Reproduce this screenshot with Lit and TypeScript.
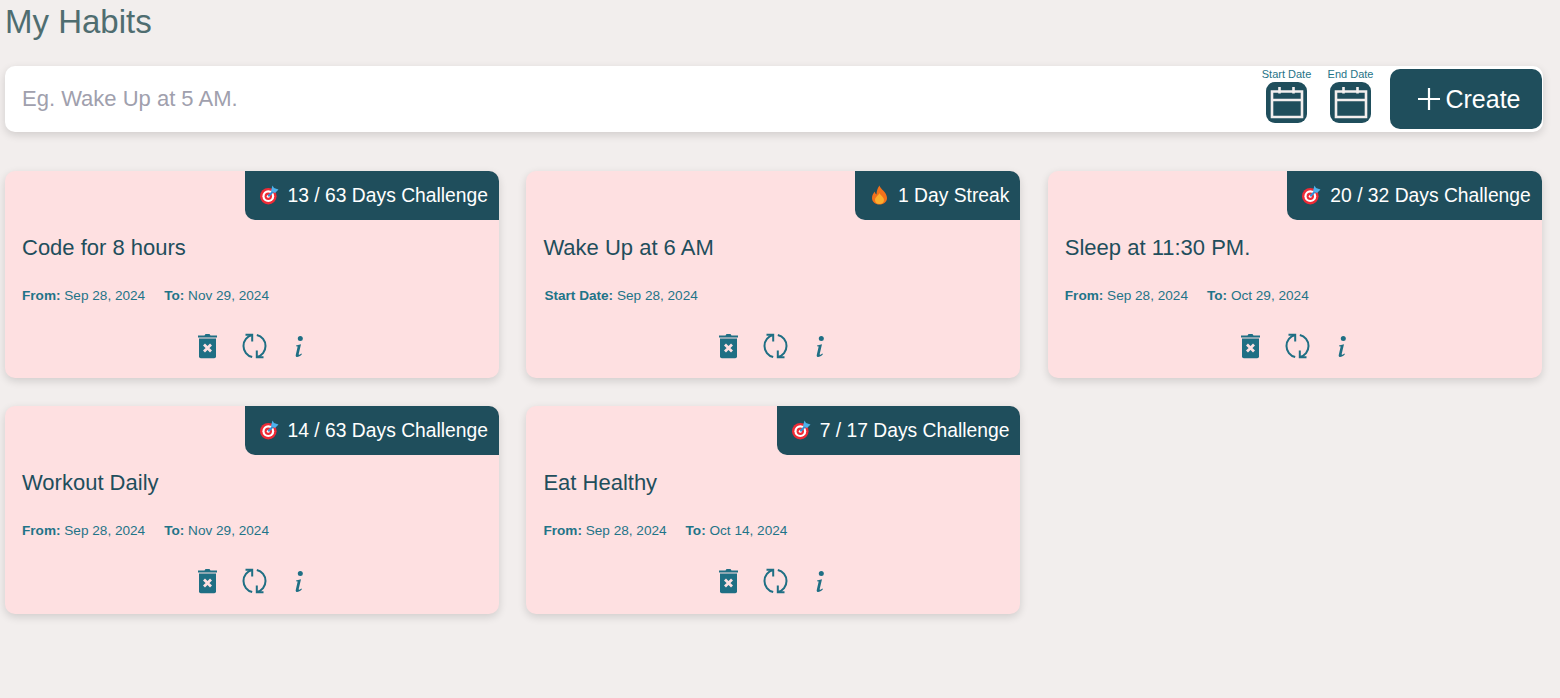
import { LitElement, css, html, svg } from 'lit'
import { customElement } from 'lit/decorators.js'

interface Habit {
  title: string
  badge: string
  kind: 'target' | 'flame'
  from: string
  to?: string
}

const HABITS: Habit[] = [
  { title: 'Code for 8 hours', badge: '13 / 63 Days Challenge', kind: 'target', from: 'Sep 28, 2024', to: 'Nov 29, 2024' },
  { title: 'Wake Up at 6 AM', badge: '1 Day Streak', kind: 'flame', from: 'Sep 28, 2024' },
  { title: 'Sleep at 11:30 PM.', badge: '20 / 32 Days Challenge', kind: 'target', from: 'Sep 28, 2024', to: 'Oct 29, 2024' },
  { title: 'Workout Daily', badge: '14 / 63 Days Challenge', kind: 'target', from: 'Sep 28, 2024', to: 'Nov 29, 2024' },
  { title: 'Eat Healthy', badge: '7 / 17 Days Challenge', kind: 'target', from: 'Sep 28, 2024', to: 'Oct 14, 2024' },
]

const calendar = html`<svg class="cal" viewBox="0 0 41 41">
  <rect width="41" height="41" rx="9" fill="#1f4e5c"></rect>
  <path d="M6 9.5h30v25.5H6zM6 18h30M13.5 5v6.500M27.5 5v6.500" fill="none" stroke="#f3efee" stroke-width="2.6"></path>
</svg>`

const target = svg`<svg class="emoji" viewBox="0 0 20 20">
  <circle cx="9.3" cy="11.2" r="8.3" fill="#ee2b36"></circle>
  <circle cx="9.3" cy="11.2" r="5.9" fill="#fff"></circle>
  <circle cx="9.3" cy="11.2" r="3.7" fill="#ee2b36"></circle>
  <circle cx="9.3" cy="11.2" r="1.5" fill="#fff"></circle>
  <path d="M9.3 11.2L14 6.5" stroke="#2f8fd8" stroke-width="2"></path>
  <path d="M13.5 0.5L15 3l4.500 1.500L16 8l-4-2z" fill="#4db2ec"></path>
</svg>`

const flame = svg`<svg class="emoji" viewBox="0 0 20 20">
  <path d="M10.5 .5C11 4 18 7 18 13c0 4-3.500 6.500-7.500 6.500S3 17 3 13c0-3 1.500-5 3-6.500C5.800 8 6.800 9 7.500 9.500 7.500 6 8.500 3 10.500 .5z" fill="#f2711c"></path>
  <path d="M10.5 8c1 2.500 4.500 4 4.500 7 0 2.500-2 4-4.500 4S6 17.500 6 15c0-3 3.500-4.500 4.500-7z" fill="#fbae2d"></path>
</svg>`

const trash = html`<svg class="act trash" viewBox="0 0 19 26">
  <path d="M0 2.500h6.500L7.500 1h4l1 1.500H19v2H0z" fill="#1f6f84"></path>
  <path d="M1 5.500h17V23.500a1.800 1.800 0 0 1-1.800 1.800H2.800A1.800 1.800 0 0 1 1 23.500z" fill="#1f6f84"></path>
  <path d="M6 11.500l7 7M13 11.500l-7 7" stroke="#fee0e1" stroke-width="2.800"></path>
</svg>`

const sync = html`<svg class="act sync" viewBox="0 0 25 26" fill="none" stroke="#1f6f84" stroke-width="2">
  <path d="M10.200 2A11.300 11.300 0 0 0 10.200 24"></path>
  <path d="M14.800 2A11.300 11.300 0 0 1 14.800 24"></path>
  <path d="M3.500 1.700h6.700v6.700"></path>
  <path d="M21.500 24.300h-6.700v-6.700"></path>
</svg>`

const info = html`<svg class="act info" viewBox="0 0 14 26">
  <g transform="translate(2 2)" fill="#1f6f84">
    <circle cx="6.300" cy="3.500" r="2.500"></circle>
    <path d="M2 10.500l5-1.300-2.300 9.800c-.2 1 .5 1.300 2.700-.5l.5.800c-2.500 2.800-6.500 4-6.200 1l1.800-8c.2-1-.3-1.200-1.300-.9z"></path>
  </g>
</svg>`

@customElement('app-root')
export class AppRoot extends LitElement {
  static styles = css`
    :host {
      display: block;
      min-height: 698px;
      background: #f2eeed;
      font-family: 'Liberation Sans', Arial, sans-serif;
      overflow: hidden;
    }
    .page {
      padding: 0 18px 0 5px;
    }
    h1 {
      margin: 0;
      padding-top: 3px;
      height: 66px;
      box-sizing: border-box;
      font-size: 33px;
      line-height: 37px;
      font-weight: 400;
      color: #4f6d70;
    }
    .bar {
      display: flex;
      align-items: center;
      height: 66px;
      margin-right: -1px;
      padding: 0 1px 0 17px;
      background: #fff;
      border-radius: 10px;
      box-shadow: 0 3px 8px rgba(0, 0, 0, 0.14);
    }
    .placeholder {
      flex: 1;
      font-size: 22px;
      color: #a0a0ad;
    }
    .date {
      display: flex;
      flex-direction: column;
      align-items: center;
      gap: 2px;
      margin-top: -7px;
      width: 49px;
      margin-right: 15px;
      font-size: 11px;
      line-height: 12px;
      color: #1f7488;
      white-space: nowrap;
    }
    .cal {
      display: block;
      width: 41px;
      height: 41px;
    }
    .create {
      display: flex;
      align-items: center;
      justify-content: center;
      gap: 5px;
      width: 152px;
      height: 60px;
      padding-left: 7px;
      box-sizing: border-box;
      background: #1f4e5c;
      border-radius: 10px;
      color: #fff;
      font-size: 25px;
    }
    .plus {
      width: 22px;
      height: 22px;
    }
    .grid {
      display: grid;
      grid-template-columns: repeat(3, 1fr);
      column-gap: 27.4px;
      row-gap: 27.8px;
      margin: 38.6px 0.2px 0 0;
    }
    .card {
      position: relative;
      height: 207.6px;
      padding: 0 0 0 17px;
      box-sizing: border-box;
      background: #fee0e1;
      border-radius: 10px;
      box-shadow: 0 3px 8px rgba(0, 0, 0, 0.14);
    }
    .badge {
      position: absolute;
      top: 0;
      right: 0;
      display: flex;
      align-items: center;
      gap: 9px;
      height: 49px;
      padding: 0 11px 0 14px;
      background: #1f4e5c;
      color: #fff;
      font-size: 19.3px;
      border-radius: 0 10px 0 10px;
      white-space: nowrap;
    }
    .badge span {
      margin-top: 2px;
    }
    .emoji {
      width: 20px;
      height: 20px;
      display: block;
    }
    .title {
      padding-top: 64px;
      font-size: 22px;
      line-height: 25px;
      color: #1f4e5c;
    }
    .dates {
      display: flex;
      gap: 19px;
      margin-top: 28px;
      font-size: 13.6px;
      line-height: 16px;
      color: #1f7488;
    }
    .dates b {
      font-weight: 700;
    }
    .start {
      padding-left: 1px;
    }
    .actions {
      display: flex;
      justify-content: center;
      align-items: center;
      gap: 25px;
      margin: 29px 0 0 -17px;
      height: 26px;
    }
    .act {
      display: block;
      height: 26px;
    }
    .trash {
      width: 19px;
    }
    .sync {
      width: 25px;
    }
    .info {
      width: 14px;
    }
  `

  render() {
    return html`
      <div class="page">
        <h1>My Habits</h1>
        <div class="bar">
          <div class="placeholder">Eg. Wake Up at 5 AM.</div>
          <div class="date">Start Date ${calendar}</div>
          <div class="date">End Date ${calendar}</div>
          <div class="create">
            <svg class="plus" viewBox="0 0 22 22"><path d="M11 0v22M0 11h22" stroke="#fff" stroke-width="2.2"></path></svg>
            Create
          </div>
        </div>
        <div class="grid">
          ${HABITS.map(
            (h) => html`
              <div class="card">
                <div class="badge">${h.kind === 'target' ? target : flame}<span>${h.badge}</span></div>
                <div class="title">${h.title}</div>
                <div class="dates">
                  ${h.to
                    ? html`<span><b>From:</b> ${h.from}</span><span><b>To:</b> ${h.to}</span>`
                    : html`<span class="start"><b>Start Date:</b> ${h.from}</span>`}
                </div>
                <div class="actions">${trash}${sync}${info}</div>
              </div>
            `,
          )}
        </div>
      </div>
    `
  }
}
